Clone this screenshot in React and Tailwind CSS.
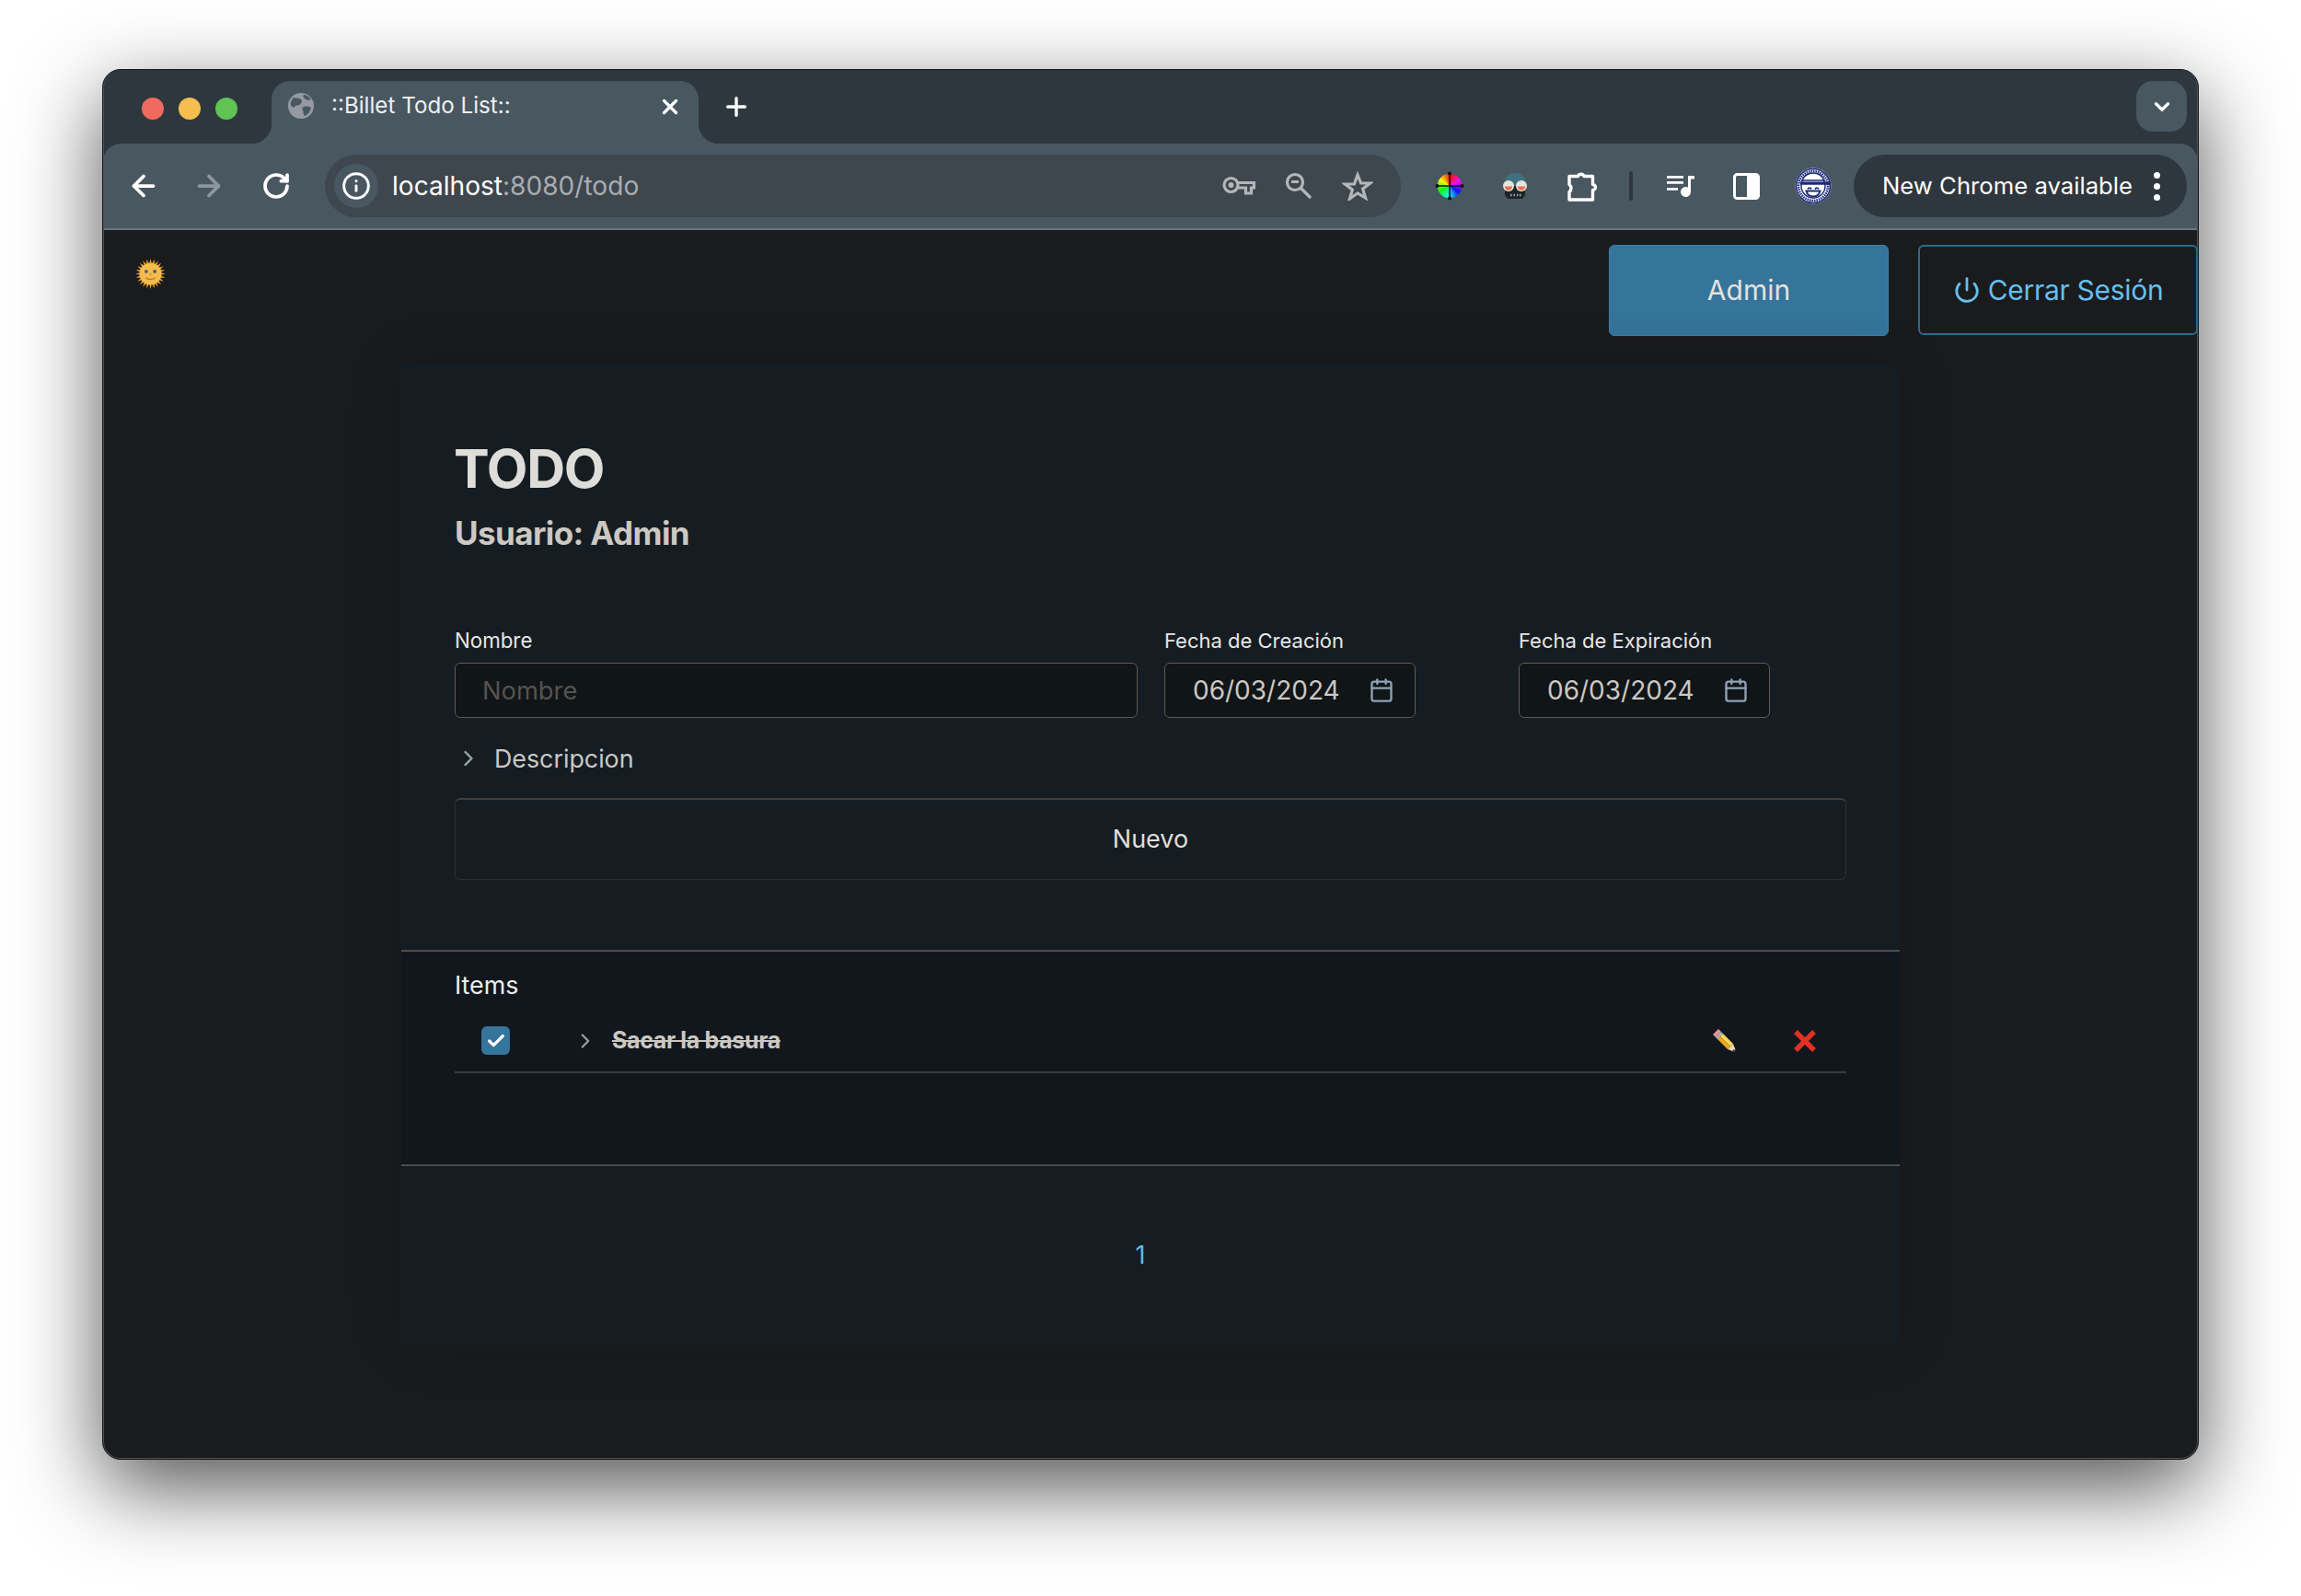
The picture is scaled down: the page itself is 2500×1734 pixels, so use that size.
import { ArrowLeft, ArrowRight, RotateCw, Info, X, Plus, ChevronDown, ChevronRight, Power, Calendar, Check } from 'lucide-react';

const KeyIcon = () => (
  <svg width="36" height="22" viewBox="0 0 36 22" fill="none" stroke="#b4b7b9" strokeWidth="3.200">
    <circle cx="9.500" cy="10" r="7.500" />
    <circle cx="9.500" cy="10" r="3" fill="#b4b7b9" stroke="none" />
    <path d="M17 7.500h17.500v5.500h-3v6h-6v-6h-8.500" />
  </svg>
);

const ZoomOutIcon = () => (
  <svg width="30" height="30" viewBox="0 0 30 30" fill="none" stroke="#b4b7b9" strokeWidth="3.200">
    <circle cx="11" cy="11" r="8.500" />
    <path d="M7 10.500h8M17 17l11 11" />
  </svg>
);

const StarIcon = () => (
  <svg width="34" height="32" viewBox="0 0 34 32" fill="none" stroke="#b4b7b9" strokeWidth="3.200" strokeLinejoin="miter">
    <path d="M17 4l3.600 9h10l-8 6.200 3 9.800L17 23.800 8.400 30l3-9.800-8-6.200h10z" />
  </svg>
);

const ColorWheel = () => {
  const wedges = Array.from({ length: 36 }, (_, i) => i * 10);
  return (
    <svg width="32" height="32" viewBox="0 0 32 32">
      {wedges.map((a) => (
        <path key={a} d="M16 16L16 3A13 13 0 0 1 18.700 3.300z" fill={`hsl(${(360 - a) % 360} 95% 52%)`} stroke={`hsl(${(360 - a) % 360} 95% 52%)`} strokeWidth=".4" transform={`rotate(${a} 16 16)`} />
      ))}
      <path d="M16 1v30M1 16h30" stroke="#111" strokeWidth="1.600" />
      <circle cx="16" cy="2.500" r="2" fill="#111" />
      <circle cx="16" cy="29.500" r="2" fill="#111" />
      <circle cx="2.500" cy="16" r="2" fill="#111" />
      <circle cx="29.500" cy="16" r="2" fill="#111" />
    </svg>
  );
};

const GlassesSkull = () => (
  <svg width="30" height="30" viewBox="0 0 30 30">
    <path d="M3 15C3 6 8 1 15 1s12 5 12 14z" fill="#3f7280" />
    <path d="M4 15h22v10l-3 4H7l-3-4z" fill="#1d2429" />
    <circle cx="8" cy="15" r="6" fill="#e9e3dc" />
    <circle cx="22" cy="15" r="6" fill="#e9e3dc" />
    <path d="M3.800 15.500a4.200 4.200 0 0 0 8.400 0zM17.800 15.500a4.200 4.200 0 0 0 8.400 0z" fill="#dc7550" />
    <path d="M10 25h1.500M13.500 25H15M17 25h1.500M20 25h1.500" stroke="#9fa8ad" strokeWidth="2.500" />
  </svg>
);

const PuzzleIcon = () => (
  <svg width="34" height="34" viewBox="0 0 34 34" fill="none" stroke="#fff" strokeWidth="3.400" strokeLinejoin="round">
    <path d="M3 6.500h9.500a3.500 3.500 0 0 1 6.500 0h9.500v9a3 3 0 0 1 0 6v10.500H3v-8.500a5 5 0 0 0 0-8z" />
  </svg>
);

const MediaIcon = () => (
  <svg width="30" height="24" viewBox="0 0 30 24" fill="#fff">
    <path d="M0 1h18v2.800H0zM0 7h18v2.800H0zM0 14h12v2.800H0z" />
    <path d="M23 1h7v3.600h-4V18.500a5.500 5.500 0 1 1-3-4.900z" />
  </svg>
);

const SidePanelIcon = () => (
  <svg width="29" height="29" viewBox="0 0 29 29">
    <rect x="1.500" y="1.500" width="26" height="26" rx="3" fill="none" stroke="#fff" strokeWidth="3" />
    <rect x="15" y="2" width="12.500" height="25" fill="#fff" />
  </svg>
);

const StampIcon = () => (
  <svg width="40" height="40" viewBox="0 0 40 40" fill="none">
    <circle cx="20" cy="20" r="19.500" fill="#eef0f4" />
    <circle cx="20" cy="20" r="18.500" stroke="#1b2a78" strokeWidth="1.600" />
    <circle cx="20" cy="20" r="16" stroke="#1b2a78" strokeWidth="2.500" strokeDasharray="1.500 1" />
    <circle cx="20" cy="20" r="13" fill="#fff" stroke="#1b2a78" strokeWidth="1.400" />
    <path d="M8 14a13 13 0 0 1 24 0z" fill="#fff" stroke="#1b2a78" strokeWidth="1.600" />
    <path d="M6 15.500h33v3.300H6z" fill="#1b2a78" />
    <path d="M12.500 25.500h15c-1 3.800-4.200 6-7.500 6s-6.500-2.200-7.500-6z" fill="#fff" stroke="#1b2a78" strokeWidth="2" />
    <path d="M14 23.500c1-1.800 3-1.800 4 0M22 23.500c1-1.800 3-1.800 4 0" stroke="#1b2a78" strokeWidth="1.600" />
  </svg>
);

const SunIcon = () => {
  const rays = Array.from({ length: 24 }, (_, i) => i * 15);
  return (
    <svg width="33" height="33" viewBox="0 0 32 32">
      {rays.map((r) => (
        <path key={r} d="M14.700 5L16 0l1.300 5z" fill="#e0a02a" transform={`rotate(${r} 16 16)`} />
      ))}
      <circle cx="16" cy="16" r="11.500" fill="#f5bd4c" />
      <circle cx="11.500" cy="13.500" r="1.800" fill="#4d5a80" />
      <circle cx="20.500" cy="13.500" r="1.800" fill="#4d5a80" />
      <path d="M11 20c2 2.500 8 2.500 10 0" stroke="#c07d24" strokeWidth="1.400" fill="none" />
      <path d="M16 15v3" stroke="#d8962e" strokeWidth="1.400" />
    </svg>
  );
};

const PencilIcon = () => (
  <svg width="26" height="26" viewBox="0 0 26 26">
    <path d="M6 0L0 6l3 3 6-6z" fill="#e8919a" />
    <path d="M9 3L3 9l2 2 6-6z" fill="#aab6c2" />
    <path d="M11 5l-3 3 11 11 3-3z" fill="#fbd75a" />
    <path d="M8 8l-3 3 11 11 3-3z" fill="#e9a824" />
    <path d="M22 16l-6 6 6.500 2.500 2-2z" fill="#ecd6ae" />
    <path d="M23 22l-1.800 1.800L25.500 25.500z" fill="#333" />
  </svg>
);

const RedCross = () => (
  <svg width="26" height="26" viewBox="0 0 26 26">
    <path d="M3 3l20 20M23 3L3 23" stroke="#df3222" strokeWidth="5.500" />
  </svg>
);

const GlobeIcon = () => (
  <svg width="28" height="28" viewBox="0 0 28 28">
    <circle cx="14" cy="14" r="14" fill="#949a9f" />
    <path d="M6 5c3 1 6 0 8 2s0 5-2 6-4 0-5 2-3 0-4-2 1-6 3-8zM17 15c3-1 7 0 8 1-1 4-4 8-7 9-2-2-1-4-2-6s-1-3 1-4zM17 2c3 0 6 2 8 5-2 1-5 1-7-1s-2-3-1-4z" fill="#495761" />
  </svg>
);

const dateFields = [
  { label: 'Fecha de Creación', gap: 'ml-[29px]' },
  { label: 'Fecha de Expiración', gap: 'ml-[112px]' },
];

const App = () => {
  return (
    <div className="min-h-[1734px] bg-white pt-[75px] pl-[111px] font-['Inter',sans-serif]">
      <div className="relative w-[2278px] h-[1511px] rounded-[20px] bg-[#1a1b1d] overflow-hidden border border-[#17191b] shadow-[0_30px_90px_rgba(0,0,0,0.68)] flex flex-col">
        <div className="absolute inset-0 rounded-[19px] border-x border-b border-[#4f5154] pointer-events-none z-10" />

        {/* Tab strip */}
        <div className="h-[80px] bg-[#2f373e] flex items-end pl-[42px] shrink-0">
          <div className="flex gap-[16px] h-[68px] items-start pt-[18px] w-[141px]">
            <span className="w-[24px] h-[24px] rounded-full bg-[#f16a5f]" />
            <span className="w-[24px] h-[24px] rounded-full bg-[#f6bd4f]" />
            <span className="w-[24px] h-[24px] rounded-full bg-[#5fc454]" />
          </div>
          <div className="relative w-[464px] h-[68px] bg-[#495761] rounded-t-[20px] flex items-center pl-[18px] pb-[14px]">
            <span className="absolute -left-[22px] bottom-0 w-[22px] h-[22px] bg-[radial-gradient(circle_at_0_0,transparent_22px,#495761_22.500px)]" />
            <span className="absolute -right-[22px] bottom-0 w-[22px] h-[22px] bg-[radial-gradient(circle_at_100%_0,transparent_22px,#495761_22.500px)]" />
            <GlobeIcon />
            <span className="ml-[19px] text-[24.200px] leading-none text-[#eef0f1]">::Billet Todo List::</span>
            <X className="absolute left-[420px] top-[15px]" size={26} color="#fff" strokeWidth={3} />
          </div>
          <div className="h-[68px] pt-[12px] ml-[25px]">
            <Plus size={32} color="#fff" strokeWidth={2.500} />
          </div>
          <div className="ml-auto mr-[12px] mb-[13px] w-[55px] h-[55px] rounded-[18px] bg-[#495761] flex items-center justify-center">
            <ChevronDown size={26} color="#fff" strokeWidth={3} />
          </div>
        </div>

        {/* Toolbar */}
        <div className="h-[94px] bg-[#2f373e] shrink-0">
          <div className="h-[92px] bg-[#495761] rounded-t-[20px] flex items-center pl-[26px] pr-[12px]">
            <ArrowLeft size={36} color="#fff" strokeWidth={2.500} />
            <ArrowRight className="ml-[35px]" size={36} color="#8e979e" strokeWidth={2.500} />
            <RotateCw className="ml-[39px]" size={32} color="#fff" strokeWidth={2.800} />
            <div className="ml-[37px] w-[1169px] h-[68px] rounded-full bg-[#3e464e] flex items-center pl-[10px] pr-[30px]">
              <div className="w-[48px] h-[48px] rounded-full bg-[#495761] flex items-center justify-center">
                <Info size={32} color="#fff" strokeWidth={2.200} />
              </div>
              <span className="ml-[15px] text-[28.100px] text-white">
                localhost<span className="text-[#a9adb0]">:8080/todo</span>
              </span>
              <div className="ml-auto flex items-center gap-[32px]">
                <KeyIcon />
                <ZoomOutIcon />
                <StarIcon />
              </div>
            </div>
            <div className="ml-[37px] flex items-center">
              <ColorWheel />
              <span className="ml-[40px]">
                <GlassesSkull />
              </span>
              <span className="ml-[41px]">
                <PuzzleIcon />
              </span>
            </div>
            <span className="ml-[34px] w-[4px] h-[32px] rounded-full bg-[#2f373e]" />
            <div className="ml-[37px] flex items-center">
              <MediaIcon />
              <span className="ml-[42px]">
                <SidePanelIcon />
              </span>
              <span className="ml-[38px]">
                <StampIcon />
              </span>
            </div>
            <div className="ml-auto w-[362px] h-[68px] rounded-full bg-[#2f373e] flex items-center pl-[31px]">
              <span className="text-[25.700px] text-white whitespace-nowrap">New Chrome available</span>
              <div className="ml-[23px] flex flex-col gap-[5px]">
                <span className="w-[7px] h-[7px] rounded-full bg-white" />
                <span className="w-[7px] h-[7px] rounded-full bg-white" />
                <span className="w-[7px] h-[7px] rounded-full bg-white" />
              </div>
            </div>
          </div>
          <div className="h-[2px] bg-[#6c767d]" />
        </div>

        {/* Page */}
        <div className="flex-1 flex flex-col">
          <div className="flex items-start pt-[16px] h-[144px] shrink-0">
            <div className="pl-[35px] pt-[15px]">
              <SunIcon />
            </div>
            <div className="ml-auto flex gap-[32px]">
              <button className="w-[304px] h-[99px] rounded-[6px] bg-[#35749b] border border-[#3a82ad] text-[30px] text-[#e4e2df]">Admin</button>
              <button className="w-[304px] h-[98px] rounded-[6px] border-2 border-[#2f6a8e] text-[30px] tracking-[-0.3px] text-[#66bfee] flex items-center justify-center gap-[8px]">
                <Power size={30} color="#66bfee" strokeWidth={2.200} />
                Cerrar Sesión
              </button>
            </div>
          </div>

          <div className="self-center w-[1628px] bg-[#151d23] shadow-[0_0_60px_rgba(0,0,0,0.12)] flex flex-col">
            <div className="px-[58px] pt-[80px] pb-[75px]">
              <h1 className="-ml-[1px] text-[58px] leading-[70px] font-bold text-[#dfddd9] tracking-[-1.200px]">TODO</h1>
              <h2 className="mt-[10px] text-[35px] leading-[50px] font-bold text-[#ccc8c2] tracking-[-0.600px]">Usuario: Admin</h2>

              <div className="mt-[76px] flex items-start">
                <label className="w-[742px] block">
                  <span className="block text-[22.300px] leading-[32px] text-[#e8e6e3]">Nombre</span>
                  <input placeholder="Nombre" className="mt-[8px] w-full h-[60px] rounded-[6px] bg-[#101518] border border-[#5e5a50] px-[29px] text-[27.300px] placeholder:text-[#55534e]" />
                </label>
                {dateFields.map((field) => (
                  <label key={field.label} className={`block w-[273px] ${field.gap}`}>
                    <span className="block text-[22px] leading-[32px] text-[#e8e6e3]">{field.label}</span>
                    <div className="mt-[8px] h-[60px] rounded-[6px] bg-[#101518] border border-[#5e5a50] flex items-center pl-[30px] pr-[22px] text-[#ccc8c2]">
                      <span className="text-[28px]">06/03/2024</span>
                      <Calendar className="ml-auto" size={28} color="#8fa3b5" strokeWidth={2} />
                    </div>
                  </label>
                ))}
              </div>

              <div className="mt-[26px] flex items-center h-[36px]">
                <ChevronRight className="ml-[1px]" size={28} color="#9ba3a8" strokeWidth={2} />
                <span className="ml-[14px] text-[26.800px] text-[#ccc8c2]">Descripcion</span>
              </div>

              <button className="mt-[25px] w-full h-[89px] mb-[1px] rounded-[6px] border border-[#2a2f33] border-t-2 border-t-[#3e3f3e] text-[27px] text-[#e0ded9]">Nuevo</button>
            </div>

            <div className="h-[235px] bg-[#11171d] border-y-2 border-[#4c4d49] px-[58px] pt-[16px]">
              <div className="text-[26.800px] leading-[40px] text-[#eeeeee]">Items</div>
              <div className="mt-[7px] h-[69px] border-b-2 border-[#3b3d3d] flex items-center">
                <span className="ml-[29px] w-[31px] h-[31px] rounded-[6px] bg-[#35749b] flex items-center justify-center">
                  <Check size={22} color="#fff" strokeWidth={3.500} />
                </span>
                <ChevronRight className="ml-[69px]" size={26} color="#9ba3a8" strokeWidth={2} />
                <span className="ml-[16px] text-[25px] font-bold tracking-[-0.350px] line-through text-[#ccc8c2]">Sacar la basura</span>
                <span className="ml-auto">
                  <PencilIcon />
                </span>
                <span className="ml-[61px] mr-[32px]">
                  <RedCross />
                </span>
              </div>
            </div>

            <div className="h-[194px] flex items-center justify-center pr-[22px]">
              <span className="text-[27px] text-[#62b9ea]">1</span>
            </div>
          </div>
        </div>
      </div>
    </div>
  );
};

export default App;
